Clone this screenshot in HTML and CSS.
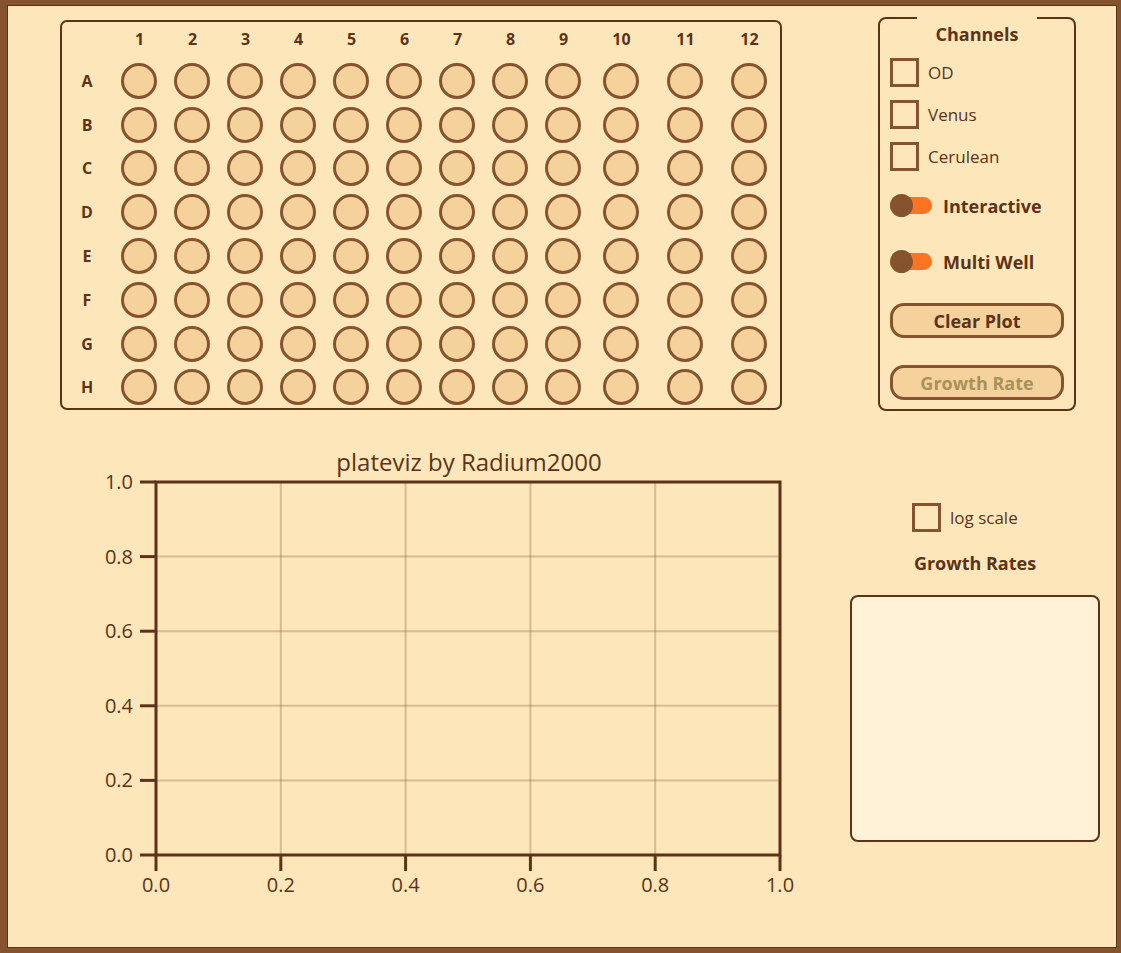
FILE: index.html
```html
<!DOCTYPE html>
<html>
<head>
<meta charset="utf-8">
<link rel="stylesheet" href="styles.css">
</head>
<body>
<div class="app">
  <div class="top-row">
    <div class="plate" id="plate"></div>
    <div class="panel">
      <div class="legend-gap"></div>
      <div class="panel-title">Channels</div>
      <label class="check-row"><span class="box"></span><span>OD</span></label>
      <label class="check-row"><span class="box"></span><span>Venus</span></label>
      <label class="check-row"><span class="box"></span><span>Cerulean</span></label>
      <div class="toggle-row first"><span class="toggle"><span class="knob"></span></span><span>Interactive</span></div>
      <div class="toggle-row second"><span class="toggle"><span class="knob"></span></span><span>Multi Well</span></div>
      <button class="btn clear">Clear Plot</button>
      <button class="btn growth">Growth Rate</button>
    </div>
  </div>
  <div class="bottom-row">
    <svg class="chart" width="740" height="460" viewBox="0 0 740 460">
      <g class="grid">
        <line x1="200.8" y1="42" x2="200.8" y2="415"/>
        <line x1="325.6" y1="42" x2="325.6" y2="415"/>
        <line x1="450.4" y1="42" x2="450.4" y2="415"/>
        <line x1="575.2" y1="42" x2="575.2" y2="415"/>
        <line x1="76" y1="116.6" x2="700" y2="116.6"/>
        <line x1="76" y1="191.2" x2="700" y2="191.2"/>
        <line x1="76" y1="265.8" x2="700" y2="265.8"/>
        <line x1="76" y1="340.4" x2="700" y2="340.4"/>
      </g>
      <g class="axis">
        <rect x="76" y="42" width="624" height="373" fill="none"/>
        <line x1="60" y1="42" x2="76" y2="42"/>
        <line x1="60" y1="116.6" x2="76" y2="116.6"/>
        <line x1="60" y1="191.2" x2="76" y2="191.2"/>
        <line x1="60" y1="265.8" x2="76" y2="265.8"/>
        <line x1="60" y1="340.4" x2="76" y2="340.4"/>
        <line x1="60" y1="415" x2="76" y2="415"/>
        <line x1="76" y1="415" x2="76" y2="431"/>
        <line x1="200.8" y1="415" x2="200.8" y2="431"/>
        <line x1="325.6" y1="415" x2="325.6" y2="431"/>
        <line x1="450.4" y1="415" x2="450.4" y2="431"/>
        <line x1="575.2" y1="415" x2="575.2" y2="431"/>
        <line x1="700" y1="415" x2="700" y2="431"/>
      </g>
      <text class="title" x="389" y="31" text-anchor="middle">plateviz by Radium2000</text>
      <g class="ylabels" text-anchor="end">
        <text x="53" y="49">1.0</text>
        <text x="53" y="123.6">0.8</text>
        <text x="53" y="198.2">0.6</text>
        <text x="53" y="272.8">0.4</text>
        <text x="53" y="347.4">0.2</text>
        <text x="53" y="422">0.0</text>
      </g>
      <g class="xlabels" text-anchor="middle">
        <text x="76" y="452">0.0</text>
        <text x="200.8" y="452">0.2</text>
        <text x="325.6" y="452">0.4</text>
        <text x="450.4" y="452">0.6</text>
        <text x="575.2" y="452">0.8</text>
        <text x="700" y="452">1.0</text>
      </g>
    </svg>
    <div class="side">
      <label class="check-row log"><span class="box"></span><span>log scale</span></label>
      <div class="side-title">Growth Rates</div>
      <div class="rates"></div>
    </div>
  </div>
</div>
<script src="app.js"></script>
</body>
</html>
```
FILE: app.js
```js
(function () {
  var plate = document.getElementById('plate');
  var html = '<div class="corner"></div>';
  for (var c = 1; c <= 12; c++) html += '<div class="col-head">' + c + '</div>';
  var rows = 'ABCDEFGH';
  for (var r = 0; r < rows.length; r++) {
    html += '<div class="row-head">' + rows[r] + '</div>';
    for (var k = 1; k <= 12; k++) html += '<div class="cell"><span class="well"></span></div>';
  }
  plate.innerHTML = html;
})();
```
FILE: styles.css
```css
* { box-sizing: border-box; }
html, body { margin: 0; padding: 0; }
body {
  font-family: "Open Sans", "Noto Sans", sans-serif;
  color: #5c3317;
  background: #fce6ba;
}
.app {
  width: 1121px;
  height: 953px;
  background: #fce6ba;
  border-style: solid;
  border-color: #85532d;
  border-width: 5px 4px 5px 7px;
  box-shadow: inset 0 0 0 1px #5c3317;
  display: flex;
  flex-direction: column;
}
.top-row {
  display: flex;
  align-items: flex-start;
  padding-top: 12px;
  padding-left: 53px;
}
.plate {
  margin-top: 3px;
  width: 722px;
  height: 390px;
  border: 2px solid #5c3317;
  border-radius: 7px;
  display: grid;
  grid-template-columns: 50px repeat(9, 53px) 63px 65px 63px;
  grid-template-rows: 37px repeat(8, 43.8px);
}
.col-head, .row-head {
  display: flex;
  align-items: center;
  justify-content: center;
  font-weight: 700;
  font-size: 16px;
  color: #5c3317;
}
.col-head { padding-left: 2px; padding-bottom: 3px; }
.cell {
  display: flex;
  align-items: center;
  justify-content: center;
}
.well {
  width: 36px;
  height: 36px;
  border-radius: 50%;
  border: 3px solid #85532d;
  background: #f5d19b;
}
.panel {
  position: relative;
  margin-left: 96px;
  width: 198px;
  height: 394px;
  border: 2px solid #5c3317;
  border-radius: 8px;
  padding: 4px 10px 0 10px;
  display: flex;
  flex-direction: column;
  align-items: flex-start;
}
.legend-gap {
  position: absolute;
  top: -2px;
  left: 37px;
  width: 120px;
  height: 2px;
  background: #fce6ba;
}
.panel-title {
  align-self: stretch;
  text-align: center;
  font-weight: 700;
  font-size: 18px;
  line-height: 22px;
  margin-bottom: 13px;
}
.check-row {
  display: flex;
  align-items: center;
  gap: 9px;
  font-size: 17px;
  line-height: 20px;
  height: 29px;
  margin-bottom: 13px;
}
.box {
  width: 29px;
  height: 29px;
  border: 3px solid #85532d;
  flex: none;
}
.toggle-row {
  display: flex;
  align-items: center;
  gap: 11px;
  height: 23px;
  font-weight: 700;
  font-size: 18px;
}
.toggle-row.first { margin-top: 10px; }
.toggle-row.second { margin-top: 33px; }
.toggle {
  position: relative;
  width: 42px;
  height: 17px;
  border-radius: 9px;
  background: #ff7420;
  display: flex;
  align-items: center;
}
.knob {
  position: absolute;
  left: 0;
  top: -3px;
  width: 23px;
  height: 23px;
  border-radius: 50%;
  background: #85532d;
}
.btn {
  width: 174px;
  height: 35px;
  border: 3px solid #85532d;
  border-radius: 14px;
  background: #f5d19b;
  font-family: inherit;
  font-weight: 700;
  font-size: 18px;
  color: #5c3317;
  padding: 0;
}
.btn.clear { margin-top: 30px; }
.btn.growth { margin-top: 27px; color: #a8915a; }
.bottom-row {
  display: flex;
  align-items: flex-start;
  margin-top: 29px;
  padding-left: 73px;
}
.chart { display: block; flex: none; }
.chart .grid line { stroke: rgba(120, 80, 40, 0.28); stroke-width: 2; }
.chart .axis line, .chart .axis rect { stroke: #5c3317; stroke-width: 3; }
.chart text { font-family: "Open Sans", "Noto Sans", sans-serif; fill: #5c3317; }
.chart .title { font-size: 24px; }
.chart .ylabels text, .chart .xlabels text { font-size: 20px; }
.side {
  margin-left: 30px;
  width: 250px;
  padding-top: 63px;
  display: flex;
  flex-direction: column;
}
.check-row.log {
  margin-left: 62px;
  margin-bottom: 0;
}
.side-title {
  text-align: center;
  font-weight: 700;
  font-size: 18px;
  line-height: 22px;
  margin-top: 20px;
}
.rates {
  margin-top: 21px;
  height: 247px;
  border: 2px solid #5c3317;
  border-radius: 8px;
  background: #fff2d6;
}
```
